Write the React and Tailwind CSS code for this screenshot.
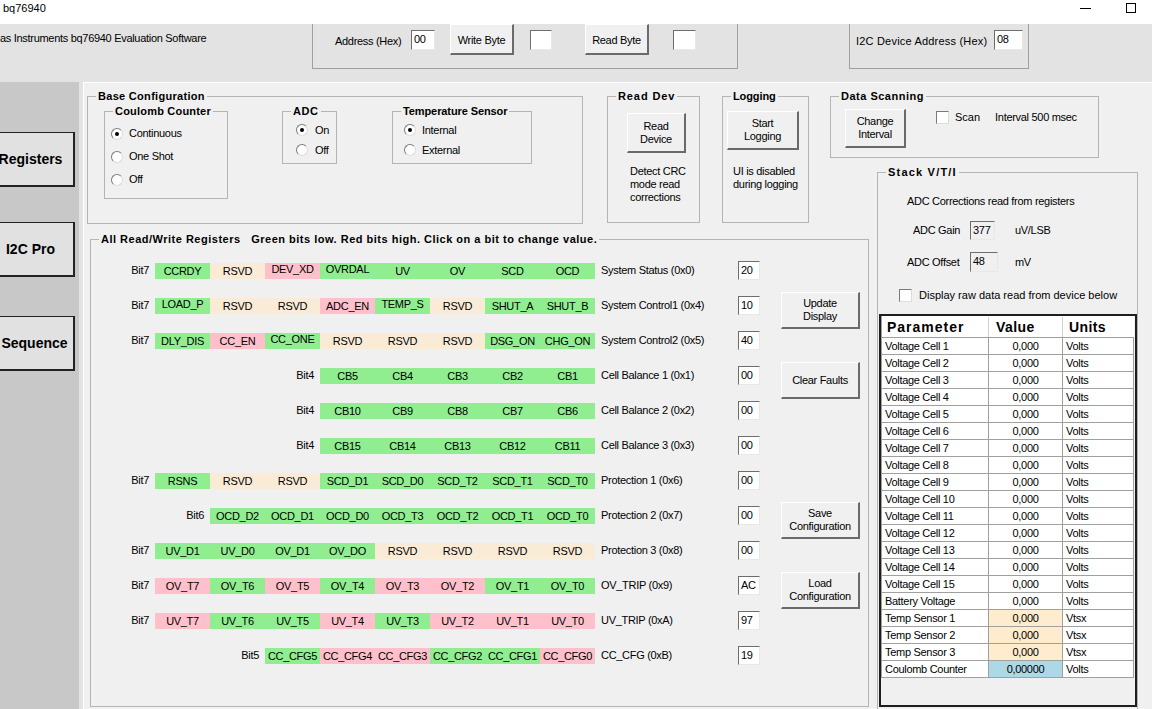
import React from "react";

const CELL_BG = {
  g: "bg-[#90ee90]",
  p: "bg-[#ffc0cb]",
  r: "bg-[#faebd7]",
};

// third item: text sits higher in the cell, as in the original tool
const registers = [
  { bit: "Bit7", name: "System Status (0x0)", value: "20", cells: [["CCRDY", "g"], ["RSVD", "r"], ["DEV_XD", "p", true], ["OVRDAL", "g", true], ["UV", "g"], ["OV", "g"], ["SCD", "g"], ["OCD", "g"]] },
  { bit: "Bit7", name: "System Control1 (0x4)", value: "10", cells: [["LOAD_P", "g", true], ["RSVD", "r"], ["RSVD", "r"], ["ADC_EN", "p"], ["TEMP_S", "g", true], ["RSVD", "r"], ["SHUT_A", "g"], ["SHUT_B", "g"]] },
  { bit: "Bit7", name: "System Control2 (0x5)", value: "40", cells: [["DLY_DIS", "g"], ["CC_EN", "p"], ["CC_ONE", "g", true], ["RSVD", "r"], ["RSVD", "r"], ["RSVD", "r"], ["DSG_ON", "g"], ["CHG_ON", "g"]] },
  { bit: "Bit4", name: "Cell Balance 1 (0x1)", value: "00", cells: [["CB5", "g"], ["CB4", "g"], ["CB3", "g"], ["CB2", "g"], ["CB1", "g"]] },
  { bit: "Bit4", name: "Cell Balance 2 (0x2)", value: "00", cells: [["CB10", "g"], ["CB9", "g"], ["CB8", "g"], ["CB7", "g"], ["CB6", "g"]] },
  { bit: "Bit4", name: "Cell Balance 3 (0x3)", value: "00", cells: [["CB15", "g"], ["CB14", "g"], ["CB13", "g"], ["CB12", "g"], ["CB11", "g"]] },
  { bit: "Bit7", name: "Protection 1 (0x6)", value: "00", cells: [["RSNS", "g"], ["RSVD", "r"], ["RSVD", "r"], ["SCD_D1", "g"], ["SCD_D0", "g"], ["SCD_T2", "g"], ["SCD_T1", "g"], ["SCD_T0", "g"]] },
  { bit: "Bit6", name: "Protection 2 (0x7)", value: "00", cells: [["OCD_D2", "g"], ["OCD_D1", "g"], ["OCD_D0", "g"], ["OCD_T3", "g"], ["OCD_T2", "g"], ["OCD_T1", "g"], ["OCD_T0", "g"]] },
  { bit: "Bit7", name: "Protection 3 (0x8)", value: "00", cells: [["UV_D1", "g"], ["UV_D0", "g"], ["OV_D1", "g"], ["OV_DO", "g"], ["RSVD", "r"], ["RSVD", "r"], ["RSVD", "r"], ["RSVD", "r"]] },
  { bit: "Bit7", name: "OV_TRIP (0x9)", value: "AC", cells: [["OV_T7", "p"], ["OV_T6", "g"], ["OV_T5", "p"], ["OV_T4", "g"], ["OV_T3", "p"], ["OV_T2", "p"], ["OV_T1", "g"], ["OV_T0", "g"]] },
  { bit: "Bit7", name: "UV_TRIP (0xA)", value: "97", cells: [["UV_T7", "p"], ["UV_T6", "g"], ["UV_T5", "g"], ["UV_T4", "p"], ["UV_T3", "g"], ["UV_T2", "p"], ["UV_T1", "p"], ["UV_T0", "p"]] },
  { bit: "Bit5", name: "CC_CFG (0xB)", value: "19", cells: [["CC_CFG5", "g"], ["CC_CFG4", "p"], ["CC_CFG3", "p"], ["CC_CFG2", "g"], ["CC_CFG1", "g"], ["CC_CFG0", "p"]] },
];

const params = [
  ...Array.from({ length: 15 }, (_, i) => ({ name: `Voltage Cell ${i + 1}`, value: "0,000", unit: "Volts" })),
  { name: "Battery Voltage", value: "0,000", unit: "Volts" },
  { name: "Temp Sensor 1", value: "0,000", unit: "Vtsx", tone: "temp" },
  { name: "Temp Sensor 2", value: "0,000", unit: "Vtsx", tone: "temp" },
  { name: "Temp Sensor 3", value: "0,000", unit: "Vtsx", tone: "temp" },
  { name: "Coulomb Counter", value: "0,00000", unit: "Volts", tone: "cc" },
];

function GroupBox({ title, className = "", track = "tracking-[-0.1px]", children }) {
  return (
    <fieldset className={`shrink-0 min-w-0 border border-[#b4b4b4] ${className}`}>
      <legend className={`ml-[8px] px-[2px] text-[11px] leading-[14px] font-bold whitespace-pre ${track}`}>{title}</legend>
      {children}
    </fieldset>
  );
}

function Btn({ className = "", children }) {
  return (
    <div className={`shrink-0 flex flex-col items-center justify-center text-center leading-[13px] bg-[#f0f0f0] border-t border-l border-t-white border-l-white border-r-2 border-b-2 border-r-[#6a6a6a] border-b-[#6a6a6a] ${className}`}>
      {children}
    </div>
  );
}

function TextBox({ value, className = "", disabled = false }) {
  return (
    <div className={`shrink-0 h-[19px] border border-t-[#6d6d6d] border-l-[#6d6d6d] border-r-[#e8e8e8] border-b-[#e8e8e8] pl-[2px] leading-[16px] ${disabled ? "bg-[#f0f0f0]" : "bg-white"} ${className}`}>
      {value}
    </div>
  );
}

function Radio({ checked, label, gap = "gap-[6px]", rowH = "h-[20px]" }) {
  return (
    <div className={`flex items-center ${gap} ${rowH}`}>
      <span className="w-[12px] h-[12px] rounded-full bg-white border border-t-[#7a7a7a] border-l-[#7a7a7a] border-r-[#dcdcdc] border-b-[#dcdcdc] flex items-center justify-center">
        {checked && <span className="w-[4px] h-[4px] rounded-full bg-black" />}
      </span>
      <span>{label}</span>
    </div>
  );
}

function CheckBox({ className = "" }) {
  return <span className={`block shrink-0 w-[13px] h-[13px] bg-white border border-t-[#7a7a7a] border-l-[#7a7a7a] border-r-[#dcdcdc] border-b-[#dcdcdc] ${className}`} />;
}

function SideButton({ label, className = "" }) {
  return (
    <div className={`-ml-[13px] w-[88px] h-[55px] flex items-center justify-center bg-[#e1e1e1] border border-[#222] border-r-2 border-b-2 text-[14px] font-bold tracking-normal ${className}`}>
      {label}
    </div>
  );
}

function RegisterRow({ row }) {
  return (
    <div className="h-[35px] flex items-center">
      <div className="w-[504px] flex items-center justify-end">
        <span className="mr-[6px]">{row.bit}</span>
        {row.cells.map(([label, tone, up], i) => (
          <div key={i} className={`w-[55px] h-[16px] flex justify-center ${up ? "items-start leading-[13px]" : "items-center leading-[16px]"} ${CELL_BG[tone]}`}>
            {label}
          </div>
        ))}
      </div>
      <span className="ml-[6px] w-[137px] whitespace-nowrap">{row.name}</span>
      <TextBox value={row.value} className="w-[22px]" />
    </div>
  );
}

export default function App() {
  return (
    <div className="w-[1152px] h-[709px] overflow-hidden flex flex-col bg-[#e3e3e3] text-black text-[11px] tracking-[-0.3px] font-['Liberation_Sans',Arial,sans-serif]">
      {/* title bar */}
      <div className="h-[24px] shrink-0 bg-white">
        <div className="h-[16px] flex items-center">
          <span className="pl-[3px] tracking-normal">bq76940</span>
          <div className="ml-auto w-[11px] h-[1px] bg-black" />
          <div className="ml-[35px] mr-[16px] w-[10px] h-[10px] border border-black" />
        </div>
      </div>

      {/* header strip */}
      <div className="h-[58px] shrink-0 flex items-start">
        <div className="w-[312px] pt-[8px] leading-[13px] whitespace-nowrap">as Instruments bq76940 Evaluation Software</div>
        <div className="w-[426px] h-[45px] border border-t-0 border-[#a0a0a0] flex items-start">
          <span className="ml-[22px] mt-[11px] w-[76px] leading-[13px]">Address (Hex)</span>
          <TextBox value="00" className="mt-[6px] w-[24px] h-[20px]" />
          <Btn className="ml-[15px] w-[64px] h-[31px] pt-[3px]">Write Byte</Btn>
          <TextBox value="" className="ml-[16px] mt-[6px] w-[22px] h-[20px]" />
          <Btn className="ml-[33px] w-[64px] h-[31px] pt-[3px]">Read Byte</Btn>
          <TextBox value="" className="ml-[24px] mt-[6px] w-[23px] h-[20px]" />
        </div>
        <div className="ml-[111px] w-[180px] h-[45px] border border-t-0 border-[#a0a0a0] flex items-start">
          <span className="ml-[6px] mt-[11px] w-[138px] leading-[13px] whitespace-nowrap tracking-[0.2px]">I2C Device Address (Hex)</span>
          <TextBox value="08" className="mt-[6px] w-[29px] h-[20px]" />
        </div>
      </div>

      {/* body */}
      <div className="flex-1 flex min-h-0">
        <div className="w-[79px] shrink-0 bg-[#c8c8c8] overflow-hidden flex flex-col">
          <SideButton label="Registers" className="mt-[50px]" />
          <SideButton label="I2C Pro" className="mt-[35px]" />
          <SideButton label="Sequence" className="mt-[39px] pl-[8px]" />
        </div>
        <div className="w-[4px] shrink-0" />
        <div className="flex-1 bg-[#f0f0f0] border-l border-t border-white overflow-hidden">
          <div className="flex items-start pt-[6px] pl-[3px]">
            {/* left column */}
            <div className="w-[782px] shrink-0">
              <div className="flex items-start">
                <GroupBox title="Base Configuration" track="tracking-[0.3px]" className="w-[496px] h-[135px]">
                  <div className="flex items-start">
                    <GroupBox title="Coulomb Counter" track="tracking-[0.2px]" className="ml-[16px] mt-[1px] w-[124px] h-[95px]">
                      <div className="pt-[4px] pl-[6px] flex flex-col">
                        <Radio checked label="Continuous" rowH="h-[23px]" />
                        <Radio label="One Shot" rowH="h-[23px]" />
                        <Radio label="Off" rowH="h-[23px]" />
                      </div>
                    </GroupBox>
                    <GroupBox title="ADC" track="tracking-[0.6px]" className="ml-[54px] mt-[1px] w-[55px] h-[60px]">
                      <div className="pt-[2px] pl-[13px] flex flex-col">
                        <Radio checked label="On" gap="gap-[7px]" />
                        <Radio label="Off" gap="gap-[7px]" />
                      </div>
                    </GroupBox>
                    <GroupBox title="Temperature Sensor" className="ml-[55px] mt-[1px] w-[140px] h-[60px]">
                      <div className="pt-[2px] pl-[11px] flex flex-col">
                        <Radio checked label="Internal" />
                        <Radio label="External" />
                      </div>
                    </GroupBox>
                  </div>
                </GroupBox>

                <GroupBox title="Read Dev" track="tracking-[0.9px]" className="ml-[24px] w-[93px] h-[134px]">
                  <Btn className="ml-[19px] mt-[10px] w-[59px] h-[40px]">
                    <span>Read</span>
                    <span>Device</span>
                  </Btn>
                  <div className="ml-[22px] mt-[12px] leading-[13px]">
                    <div>Detect CRC</div>
                    <div>mode read</div>
                    <div>corrections</div>
                  </div>
                </GroupBox>

                <GroupBox title="Logging" className="ml-[22px] w-[87px] h-[134px]">
                  <Btn className="ml-[4px] mt-[8px] w-[72px] h-[39px]">
                    <span>Start</span>
                    <span>Logging</span>
                  </Btn>
                  <div className="ml-[10px] mt-[15px] leading-[13px]">
                    <div>UI is disabled</div>
                    <div>during logging</div>
                  </div>
                </GroupBox>

                <GroupBox title="Data Scanning" track="tracking-[0.5px]" className="ml-[21px] w-[269px] h-[69px]">
                  <div className="flex items-start">
                    <Btn className="ml-[14px] mt-[6px] w-[61px] h-[39px]">
                      <span>Change</span>
                      <span>Interval</span>
                    </Btn>
                    <div className="mt-[8px] h-[13px] flex items-center">
                      <CheckBox className="ml-[30px]" />
                      <span className="ml-[6px] tracking-normal">Scan</span>
                      <span className="ml-[15px] whitespace-nowrap">Interval 500 msec</span>
                    </div>
                  </div>
                </GroupBox>
              </div>

              <GroupBox
                title={"All Read/Write Registers   Green bits low. Red bits high. Click on a bit to change value."}
                track="tracking-[0.5px]"
                className="ml-[3px] mt-[8px] w-[779px] h-[475px]"
              >
                <div className="flex items-start">
                  <div className="pt-[7px] flex flex-col">
                    {registers.map((row, i) => (
                      <RegisterRow key={i} row={row} />
                    ))}
                  </div>
                  <div className="ml-[21px] flex flex-col">
                    <Btn className="mt-[46px] w-[79px] h-[37px]">
                      <span>Update</span>
                      <span>Display</span>
                    </Btn>
                    <Btn className="mt-[33px] w-[79px] h-[37px]">Clear Faults</Btn>
                    <Btn className="mt-[103px] w-[79px] h-[37px]">
                      <span>Save</span>
                      <span>Configuration</span>
                    </Btn>
                    <Btn className="mt-[33px] w-[79px] h-[37px]">
                      <span>Load</span>
                      <span>Configuration</span>
                    </Btn>
                  </div>
                </div>
              </GroupBox>
            </div>

            {/* right column */}
            <GroupBox title="Stack V/T/I" track="tracking-[1.2px]" className="ml-[8px] mt-[76px] w-[261px] h-[560px]">
              <div className="pl-[29px] mt-[16px] leading-[13px] whitespace-nowrap">ADC Corrections read from registers</div>
              <div className="mt-[13px] h-[19px] flex items-center">
                <span className="ml-[35px] w-[57px]">ADC Gain</span>
                <TextBox value="377" disabled className="w-[25px]" />
                <span className="ml-[20px]">uV/LSB</span>
              </div>
              <div className="mt-[12px] h-[20px] flex items-center">
                <span className="ml-[29px] w-[63px]">ADC Offset</span>
                <TextBox value="48" disabled className="w-[28px] h-[20px]" />
                <span className="ml-[17px]">mV</span>
              </div>
              <div className="mt-[17px] h-[13px] flex items-center">
                <CheckBox className="ml-[21px]" />
                <span className="ml-[7px] whitespace-nowrap tracking-normal">Display raw data read from device below</span>
              </div>
              <div className="ml-[1px] mt-[12px] w-[258px] h-[393px] border-2 border-[#1e1e1e] bg-[#f0f0f0]">
                <div className="border-l border-[#a0a0a0] w-[253px]">
                  <div className="flex h-[22px] pt-[1px] bg-white border-b border-[#a0a0a0] text-[14px] font-bold tracking-[0.4px]">
                    <div className="w-[107px] pl-[5px] flex items-center border-r border-[#d0d0d0] tracking-[1px]">Parameter</div>
                    <div className="w-[74px] pl-[7px] flex items-center border-r border-[#d0d0d0]">Value</div>
                    <div className="w-[71px] pl-[6px] flex items-center">Units</div>
                  </div>
                  {params.map((p, i) => (
                    <div key={i} className="flex h-[17px] bg-white border-b border-[#a0a0a0] leading-[16px]">
                      <div className="w-[107px] pl-[3px] border-r border-[#a0a0a0] whitespace-nowrap">{p.name}</div>
                      <div className={`w-[74px] text-center border-r border-[#a0a0a0] ${p.tone === "temp" ? "bg-[#ffebcd]" : p.tone === "cc" ? "bg-[#add8e6]" : ""}`}>{p.value}</div>
                      <div className="w-[71px] pl-[3px] border-r border-[#a0a0a0]">{p.unit}</div>
                    </div>
                  ))}
                </div>
              </div>
            </GroupBox>
          </div>
        </div>
      </div>
    </div>
  );
}
